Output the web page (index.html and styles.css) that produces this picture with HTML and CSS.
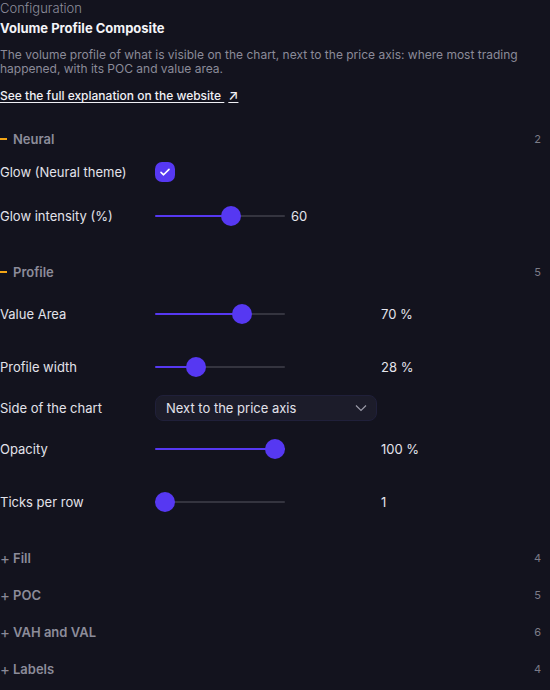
FILE: index.html
```html
<!DOCTYPE html>
<html>
  <head>
    <title>Configuration</title>
    <link rel="stylesheet" href="styles.css">
  </head>
  <body>
    <div class="panel">
      <div class="kicker">Configuration</div>
      <h1>Volume Profile Composite</h1>
      <p class="desc">
        The volume profile of what is visible on the chart, next to the price axis: where most trading
        happened, with its POC and value area.
      </p>
      <a class="doc-link" href="#">See the full explanation on the website <span class="arrow">↗</span></a>

      <div class="sections">
        <div class="section open">
          <div class="section-head">
            <span class="toggle dash"></span>
            <span class="section-title">Neural</span>
            <span class="count">2</span>
          </div>
          <div class="field check-row">
            <label>Glow (Neural theme)</label>
            <span class="checkbox">
              <svg width="12" height="12" viewBox="0 0 12 12"><path d="M2 6.3l2.6 2.5L10 3.4" fill="none" stroke="#fff" stroke-width="1.6" stroke-linecap="round" stroke-linejoin="round"/></svg>
            </span>
          </div>
          <div class="field">
            <label>Glow intensity (%)</label>
            <input type="range" class="slider" min="0" max="100" value="60" style="--p: 60%">
            <span class="inline-value">60</span>
          </div>
        </div>

        <div class="section open">
          <div class="section-head">
            <span class="toggle dash"></span>
            <span class="section-title">Profile</span>
            <span class="count">5</span>
          </div>
          <div class="field">
            <label>Value Area</label>
            <div class="control"><input type="range" class="slider" min="0" max="100" value="70" style="--p: 70%"></div>
            <span class="value">70 %</span>
          </div>
          <div class="field">
            <label>Profile width</label>
            <div class="control"><input type="range" class="slider" min="0" max="100" value="28" style="--p: 28%"></div>
            <span class="value">28 %</span>
          </div>
          <div class="field select-row">
            <label>Side of the chart</label>
            <div class="control">
              <div class="select">
                <span>Next to the price axis</span>
                <svg width="12" height="8" viewBox="0 0 12 8"><path d="M1 1.5l5 5 5-5" fill="none" stroke="#9a9aa8" stroke-width="1.2"/></svg>
              </div>
            </div>
          </div>
          <div class="field">
            <label>Opacity</label>
            <div class="control"><input type="range" class="slider" min="0" max="100" value="100" style="--p: 100%"></div>
            <span class="value">100 %</span>
          </div>
          <div class="field">
            <label>Ticks per row</label>
            <div class="control"><input type="range" class="slider" min="1" max="50" value="1" style="--p: 0%"></div>
            <span class="value">1</span>
          </div>
        </div>

        <div class="section">
          <div class="section-head">
            <span class="toggle">+</span>
            <span class="section-title">Fill</span>
            <span class="count">4</span>
          </div>
        </div>
        <div class="section">
          <div class="section-head">
            <span class="toggle">+</span>
            <span class="section-title">POC</span>
            <span class="count">5</span>
          </div>
        </div>
        <div class="section">
          <div class="section-head">
            <span class="toggle">+</span>
            <span class="section-title">VAH and VAL</span>
            <span class="count">6</span>
          </div>
        </div>
        <div class="section">
          <div class="section-head">
            <span class="toggle">+</span>
            <span class="section-title">Labels</span>
            <span class="count">4</span>
          </div>
        </div>
      </div>
    </div>
  </body>
</html>
```

FILE: styles.css
```css
* {
  box-sizing: border-box;
}
body {
  margin: 0;
  background: #13131e;
  color: #e4e4ec;
  font-family: Inter, 'Noto Sans', sans-serif;
  font-size: 13px;
}
.panel {
  padding: 0 9px 0 0;
}
.kicker {
  font-size: 13px;
  line-height: 16px;
  font-weight: 300;
  color: #8e8e9c;
}
h1 {
  margin: 2px 0 0;
  font-size: 13px;
  line-height: 20px;
  font-weight: 700;
  color: #f4f4f8;
}
.desc {
  margin: 10px 0 0;
  line-height: 14px;
  font-size: 12px;
  color: #8b8b99;
}
.doc-link {
  display: inline-block;
  margin-top: 11px;
  line-height: 16px;
  font-size: 12px;
  color: #f0f0f5;
  font-weight: 500;
  text-decoration: underline;
  text-underline-offset: 2px;
}
.doc-link .arrow {
  margin-left: 4px;
  font-size: 13px;
}
.sections {
  margin-top: 21px;
}
.section {
  margin-bottom: 9px;
}
.section.open {
  padding-bottom: 7px;
}
.section-head {
  display: flex;
  align-items: center;
  height: 28px;
}
.section.open .section-head {
  margin-bottom: 1px;
}
.toggle {
  width: 13px;
  color: #8a8a98;
  font-size: 15px;
  line-height: 1;
}
.toggle.dash::before {
  content: '';
  display: block;
  width: 7px;
  height: 2px;
  background: #f2a516;
}
.section-title {
  font-weight: 600;
  color: #8c8c9a;
}
.count {
  margin-left: auto;
  font-size: 11px;
  color: #7c7c88;
}
.field {
  display: flex;
  align-items: center;
  height: 53px;
}
.field.check-row {
  height: 35px;
}
.field.select-row {
  height: 29px;
}
.field label {
  width: 155px;
  flex: none;
  color: #e2e2ea;
}
.control {
  width: 222px;
  flex: none;
}
.value {
  margin-left: 4px;
  color: #e4e4ec;
}
.inline-value {
  margin-left: 6px;
  color: #e4e4ec;
}
.checkbox {
  width: 20px;
  height: 20px;
  border-radius: 7px;
  background: #5638f2;
  display: flex;
  align-items: center;
  justify-content: center;
}
.slider {
  -webkit-appearance: none;
  appearance: none;
  display: block;
  width: 130px;
  height: 20px;
  margin: 0;
  background: transparent;
}
.slider::-webkit-slider-runnable-track {
  height: 2px;
  border-radius: 1px;
  background: linear-gradient(to right, #5638f2 var(--p), #34343f var(--p));
}
.slider::-webkit-slider-thumb {
  -webkit-appearance: none;
  width: 20px;
  height: 20px;
  margin-top: -9px;
  border-radius: 50%;
  background: #5638f2;
  border: none;
}
.select {
  display: flex;
  align-items: center;
  justify-content: space-between;
  height: 26px;
  padding: 0 9px 0 10px;
  border-radius: 8px;
  background: #1c1c2a;
  border: 1px solid #20203a;
  color: #e2e2ea;
}
```
